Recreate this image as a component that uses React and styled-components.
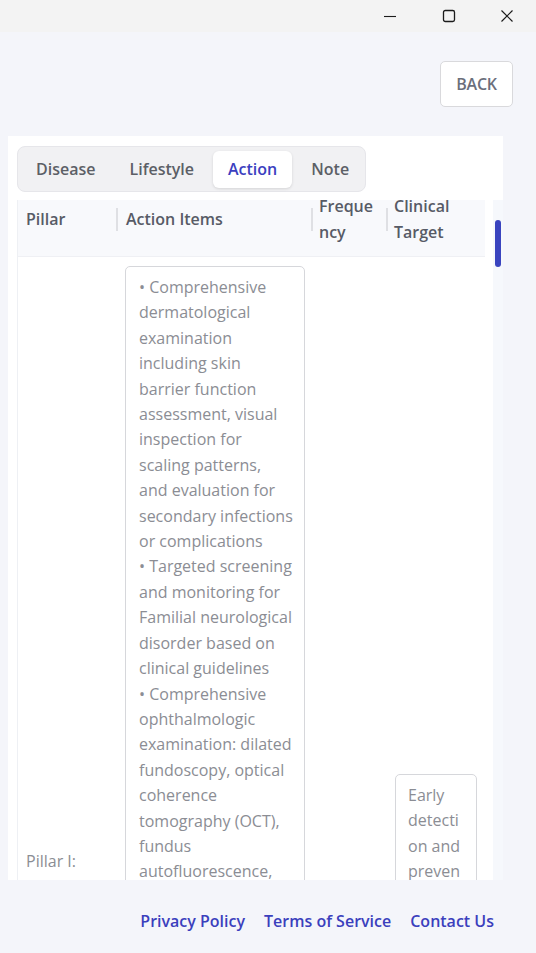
import React from "react";
import styled, { createGlobalStyle } from "styled-components";

const Global = createGlobalStyle`
  html, body { margin: 0; padding: 0; }
  body {
    background: #f4f5fa;
    font-family: "Open Sans", "Noto Sans", sans-serif;
    overflow: hidden;
  }
`;

const Window = styled.div`
  width: 536px;
  height: 953px;
  display: flex;
  flex-direction: column;
  background: #f4f5fa;
  overflow: hidden;
`;

const TitleBar = styled.div`
  height: 32px;
  flex: none;
  background: #f3f3f3;
  display: flex;
  justify-content: flex-end;
  align-items: center;
`;

const WinButton = styled.div`
  width: 58px;
  height: 32px;
  display: flex;
  align-items: center;
  justify-content: center;
  color: #1b1b1b;
`;

const BackRow = styled.div`
  display: flex;
  justify-content: flex-end;
  padding: 29px 23px 0 0;
`;

const BackButton = styled.button`
  width: 73px;
  height: 46px;
  background: #ffffff;
  border: 1px solid #d9d9dc;
  border-radius: 5px;
  font-family: "Open Sans", sans-serif;
  font-size: 16px;
  font-weight: 600;
  color: #6b6f7c;
  letter-spacing: -0.2px;
  padding: 0;
`;

const Card = styled.div`
  margin: 29px 0 0 8px;
  width: 495px;
  height: 744px;
  flex: none;
  background: #ffffff;
  display: flex;
  flex-direction: column;
  padding: 10px 0 0 9px;
  box-sizing: border-box;
  overflow: hidden;
`;

const Tabs = styled.div`
  display: flex;
  gap: 4px;
  align-self: flex-start;
  padding: 3px;
  background: #f1f1f3;
  border: 1px solid #e6e6ea;
  border-radius: 8px;
  height: 46px;
  box-sizing: border-box;
  align-items: center;
  width: 349px;
`;

const Tab = styled.div`
  height: 37px;
  display: flex;
  align-items: center;
  padding: 0 15px;
  border-radius: 6px;
  font-size: 16px;
  font-weight: 600;
  color: ${(p) => (p.$active ? "#3b3fbf" : "#5c5f66")};
  background: ${(p) => (p.$active ? "#ffffff" : "transparent")};
  box-shadow: ${(p) => (p.$active ? "0 1px 3px rgba(0,0,0,0.12)" : "none")};
`;

const TableArea = styled.div`
  margin-top: 8px;
  flex: 1;
  display: flex;
  min-height: 0;
`;

const TableClip = styled.div`
  width: 468px;
  overflow: hidden;
  border-left: 1px solid #eef0f4;
  box-sizing: border-box;
`;

const Table = styled.table`
  margin-top: -18px;
  width: 468px;
  table-layout: fixed;
  border-collapse: collapse;
`;

const Th = styled.th`
  position: relative;
  background: #f8f9fc;
  text-align: left;
  font-size: 16px;
  font-weight: 600;
  color: #575b66;
  line-height: 26px;
  padding: 11px 6px 11px ${(p) => p.$pad || 8}px;
  border-bottom: 1px solid #eff0f4;
  vertical-align: middle;
  overflow-wrap: anywhere;
  &::before {
    content: "";
    display: ${(p) => (p.$first ? "none" : "block")};
    position: absolute;
    left: 0;
    top: 50%;
    width: 2px;
    height: 23px;
    margin-top: -11px;
    background: #dfe0e4;
  }
`;

const Td = styled.td`
  padding: 9px 6px 9px ${(p) => p.$pad || 8}px;
  vertical-align: middle;
  font-size: 16px;
  color: #8b8d94;
  line-height: 25.4px;
`;

const Box = styled.div`
  border: 1px solid #d6d7db;
  border-radius: 5px;
  padding: 8px 6px 8px ${(p) => p.$pad}px;
  box-sizing: border-box;
  width: ${(p) => p.$w}px;
  min-height: ${(p) => p.$h}px;
  white-space: pre;
  overflow: hidden;
  font-size: 16px;
  line-height: 25.4px;
  color: #8b8d94;
`;

const Track = styled.div`
  margin-left: 8px;
  width: 10px;
  background: #f6f8fc;
  display: flex;
  justify-content: center;
  padding-top: 20px;
`;

const Thumb = styled.div`
  width: 6px;
  height: 47px;
  border-radius: 3px;
  background: #3a44bf;
`;

const Footer = styled.div`
  flex: 1;
  display: flex;
  justify-content: flex-end;
  align-items: center;
  gap: 19px;
  padding: 9px 42px 0 0;
`;

const FootLink = styled.a`
  font-size: 16px;
  font-weight: 600;
  color: #3b3fbd;
  text-decoration: none;
`;

const actionText = [
  "• Comprehensive",
  "dermatological",
  "examination",
  "including skin",
  "barrier function",
  "assessment, visual",
  "inspection for",
  "scaling patterns,",
  "and evaluation for",
  "secondary infections",
  "or complications",
  "• Targeted screening",
  "and monitoring for",
  "Familial neurological",
  "disorder based on",
  "clinical guidelines",
  "• Comprehensive",
  "ophthalmologic",
  "examination: dilated",
  "fundoscopy, optical",
  "coherence",
  "tomography (OCT),",
  "fundus",
  "autofluorescence,",
  "and visual field",
  "testing",
  "• Genetic counseling",
  "and family",
  "screening for",
  "hereditary",
  "conditions",
  "• Regular",
  "monitoring of",
  "clinical markers",
  "and symptom",
  "progression with",
  "documented",
  "follow-up",
  "assessments",
  "• Coordination with",
  "specialists for",
  "integrated",
  "multidisciplinary",
  "care planning",
  "and periodic",
  "review",
].join("\n");

const clinicalText = ["Early", "detecti", "on and", "preven", "tion of", "compli"].join("\n");

export default function App() {
  return (
    <Window>
      <Global />
      <TitleBar>
        <WinButton>
          <svg width="14" height="14" viewBox="0 0 14 14">
            <path d="M0 7.5h12" stroke="#1b1b1b" strokeWidth="1.1" />
          </svg>
        </WinButton>
        <WinButton>
          <svg width="14" height="14" viewBox="0 0 14 14">
            <rect x="1.5" y="1.5" width="11" height="11" rx="1.8" fill="none" stroke="#1b1b1b" strokeWidth="1.3" />
          </svg>
        </WinButton>
        <WinButton>
          <svg width="14" height="14" viewBox="0 0 14 14">
            <path d="M1.5 1.5l11 11M12.5 1.5l-11 11" stroke="#1b1b1b" strokeWidth="1.2" />
          </svg>
        </WinButton>
      </TitleBar>
      <BackRow>
        <BackButton>BACK</BackButton>
      </BackRow>
      <Card>
        <Tabs>
          <Tab>Disease</Tab>
          <Tab>Lifestyle</Tab>
          <Tab $active>Action</Tab>
          <Tab>Note</Tab>
        </Tabs>
        <TableArea>
          <TableClip>
            <Table>
              <colgroup>
                <col style={{ width: 98 }} />
                <col style={{ width: 195 }} />
                <col style={{ width: 75 }} />
                <col style={{ width: 100 }} />
              </colgroup>
              <thead>
                <tr>
                  <Th $first>Pillar</Th>
                  <Th $pad={10}>Action Items</Th>
                  <Th>Frequency</Th>
                  <Th>Clinical Target</Th>
                </tr>
              </thead>
              <tbody>
                <tr>
                  <Td>Pillar I:</Td>
                  <Td $pad={9}>
                    <Box $w={180} $h={1192} $pad={13}>{actionText}</Box>
                  </Td>
                  <Td></Td>
                  <Td $pad={9}>
                    <Box $w={82} $h={176} $pad={12}>{clinicalText}</Box>
                  </Td>
                </tr>
              </tbody>
            </Table>
          </TableClip>
          <Track>
            <Thumb />
          </Track>
        </TableArea>
      </Card>
      <Footer>
        <FootLink href="#">Privacy Policy</FootLink>
        <FootLink href="#">Terms of Service</FootLink>
        <FootLink href="#">Contact Us</FootLink>
      </Footer>
    </Window>
  );
}
